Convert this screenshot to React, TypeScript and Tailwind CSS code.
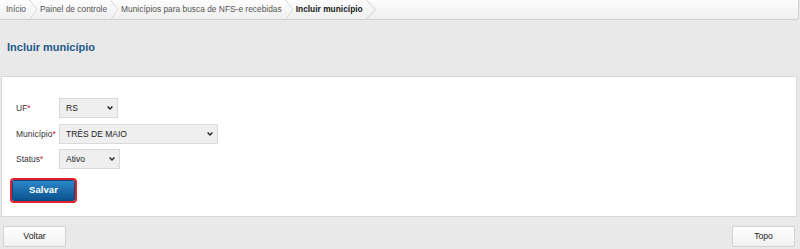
import { useState } from 'react';

const crumbs = ['Início', 'Painel de controle', 'Municípios para busca de NFS-e recebidas', 'Incluir município'];

function Sep({ wide }: { wide?: boolean }) {
  return wide ? (
    <svg width="10" height="19" viewBox="0 0 10 19" className="mx-[3px] shrink-0">
      <polyline points="0.5,0 9.5,9.5 0.5,19" fill="none" stroke="#cfcfcf" strokeWidth="1" />
    </svg>
  ) : (
    <svg width="8" height="19" viewBox="0 0 8 19" className="mx-[3px] shrink-0">
      <polyline points="0.5,0 7.5,9.5 0.5,19" fill="none" stroke="#cfcfcf" strokeWidth="1" />
      <polyline points="-0.5,0 6.5,9.5 -0.5,19" fill="none" stroke="#ffffff" strokeWidth="1" />
    </svg>
  );
}

function Field({
  label,
  width,
  value,
  options,
  onChange,
}: {
  label: string;
  width: string;
  value: string;
  options: string[];
  onChange: (v: string) => void;
}) {
  return (
    <div className="flex items-center h-[20px] leading-[12px]">
      <label className="w-[43px] text-[8.5px] text-[#333]">
        {label}
        <span className="text-[#e0202a]">*</span>
      </label>
      <div className={`relative h-[20px] ${width}`}>
        <select
          value={value}
          onChange={(e) => onChange(e.target.value)}
          className="appearance-none w-full h-full bg-[#efefef] border border-[#dadada] pl-[6px] text-[8.5px] text-[#222] outline-none"
        >
          {options.map((o) => (
            <option key={o}>{o}</option>
          ))}
        </select>
        <svg
          width="6"
          height="4"
          viewBox="0 0 6 4"
          className="absolute right-[5px] top-[8px] pointer-events-none"
        >
          <polyline points="0.6,0.6 3,3 5.4,0.6" fill="none" stroke="#222" strokeWidth="1.4" />
        </svg>
      </div>
    </div>
  );
}

export default function App() {
  const [uf, setUf] = useState('RS');
  const [municipio, setMunicipio] = useState('TRÊS DE MAIO');
  const [status, setStatus] = useState('Ativo');

  return (
    <div className="w-[800px] h-[249px] bg-[#e9e9e9] font-['Liberation_Sans',Arial,sans-serif] overflow-hidden">
      <nav className="h-[20px] w-[799px] flex items-center bg-gradient-to-b from-[#fdfdfd] to-[#efefef] border-b border-r border-[#d0d0d0] rounded-br-[3px] pl-[6px]">
        {crumbs.map((c, i) => (
          <div key={c} className="flex items-center">
            <span
              className={
                i === crumbs.length - 1
                  ? 'text-[8.4px] font-bold text-[#1a1a1a]'
                  : 'text-[8.4px] text-[#555]'
              }
            >
              {c}
            </span>
            <Sep wide={i === crumbs.length - 1} />
          </div>
        ))}
      </nav>

      <h1 className="pt-[21px] pl-[7px] text-[11px] leading-[13px] font-bold text-[#23598a]">
        Incluir município
      </h1>

      <section className="mt-[22px] ml-[1px] mr-[3px] bg-white border border-[#d8d8d8] pt-[21px] pb-[13px]">
        <div className="pl-[14px] flex flex-col gap-[5.5px]">
          <Field label="UF" width="w-[59px]" value={uf} options={['RS', 'SC', 'PR', 'SP']} onChange={setUf} />
          <Field
            label="Município"
            width="w-[159px]"
            value={municipio}
            options={['TRÊS DE MAIO', 'PORTO ALEGRE', 'SANTA ROSA']}
            onChange={setMunicipio}
          />
          <Field label="Status" width="w-[61px]" value={status} options={['Ativo', 'Inativo']} onChange={setStatus} />
        </div>
        <div className="flex pl-[8px] mt-[9px]">
          <button className="w-[67px] h-[25px] rounded-[4px] border-2 border-[#e3202b] p-0">
            <span className="flex items-center justify-center w-full h-full rounded-[2px] bg-gradient-to-b from-[#2b88c9] to-[#0b5390] border border-[#0a4a80] text-white text-[9.6px] font-bold">
              Salvar
            </span>
          </button>
        </div>
      </section>

      <div className="flex justify-between mt-[9px] pl-[3px] pr-[5px]">
        <button className="w-[63px] h-[21px] rounded-[2px] border border-[#d2d2d2] bg-gradient-to-b from-white to-[#f1f1f1] text-[8.8px] text-[#222]">
          Voltar
        </button>
        <button className="w-[63px] h-[21px] rounded-[2px] border border-[#d2d2d2] bg-gradient-to-b from-white to-[#f1f1f1] text-[8.6px] text-[#222]">
          Topo
        </button>
      </div>
    </div>
  );
}
